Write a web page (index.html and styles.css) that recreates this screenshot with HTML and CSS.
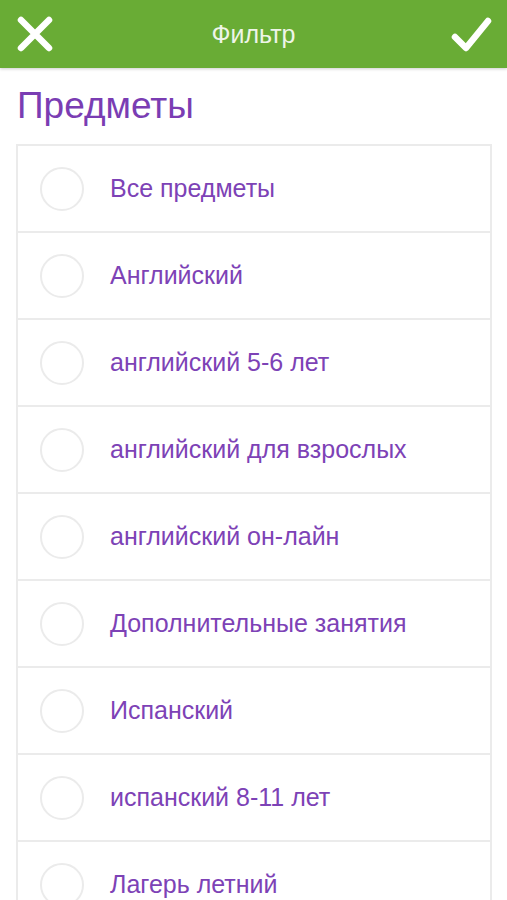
FILE: index.html
```html
<!DOCTYPE html>
<html lang="ru">
<head>
    <meta charset="UTF-8">
    <meta name="viewport" content="width=device-width, initial-scale=1.0">
    <title>Фильтр</title>
    <link rel="stylesheet" href="styles.css">
</head>
<body>
    <header class="topbar">
        <button class="icon-btn" aria-label="Закрыть">
            <svg width="36" height="36" viewBox="0 0 36 36">
                <path d="M4 4 L32 32 M32 4 L4 32" stroke="#fff" stroke-width="6.5" stroke-linecap="round" fill="none"/>
            </svg>
        </button>
        <div class="topbar-title">Фильтр</div>
        <button class="icon-btn" aria-label="Применить">
            <svg width="42" height="36" viewBox="0 0 42 36">
                <path d="M5 21 L16 32 L38 5" stroke="#fff" stroke-width="6.5" stroke-linecap="round" stroke-linejoin="round" fill="none"/>
            </svg>
        </button>
    </header>

    <div class="content">
        <h1 class="section-title">Предметы</h1>
        <ul class="subject-list">
            <li class="subject-item"><span class="radio"></span>Все предметы</li>
            <li class="subject-item"><span class="radio"></span>Английский</li>
            <li class="subject-item"><span class="radio"></span>английский 5-6 лет</li>
            <li class="subject-item"><span class="radio"></span>английский для взрослых</li>
            <li class="subject-item"><span class="radio"></span>английский он-лайн</li>
            <li class="subject-item"><span class="radio"></span>Дополнительные занятия</li>
            <li class="subject-item"><span class="radio"></span>Испанский</li>
            <li class="subject-item"><span class="radio"></span>испанский 8-11 лет</li>
            <li class="subject-item"><span class="radio"></span>Лагерь летний</li>
        </ul>
    </div>
</body>
</html>
```

FILE: styles.css
```css
body {
    font-family: "Liberation Sans", Arial, sans-serif;
    background-color: #fff;
    margin: 0;
    padding: 0;
    overflow: hidden;
}
.topbar {
    height: 68px;
    background-color: #69ac35;
    display: flex;
    align-items: center;
    justify-content: space-between;
    padding: 0 15px 0 17px;
    box-shadow: 0 1px 3px rgba(0, 0, 0, 0.2);
    position: relative;
}
.icon-btn {
    background: none;
    border: none;
    padding: 0;
    display: flex;
}
.topbar-title {
    color: #eef5e8;
    font-size: 25px;
    margin-left: 4px;
}
.content {
    padding: 0 15px 0 16px;
}
.section-title {
    margin: 17px 0 0 1px;
    font-weight: normal;
    font-size: 37px;
    line-height: 42px;
    color: #7a3db3;
    height: 59px;
}
.subject-list {
    list-style: none;
    margin: 0;
    padding: 0;
    border: 2px solid #ebebeb;
    border-bottom: none;
}
.subject-item {
    display: flex;
    align-items: center;
    height: 85px;
    border-bottom: 2px solid #ebebeb;
    padding-left: 22px;
    font-size: 25px;
    color: #7d42b6;
}
.radio {
    width: 40px;
    height: 40px;
    border: 2px solid #ebebeb;
    border-radius: 50%;
    margin-right: 26px;
    flex-shrink: 0;
}
```
